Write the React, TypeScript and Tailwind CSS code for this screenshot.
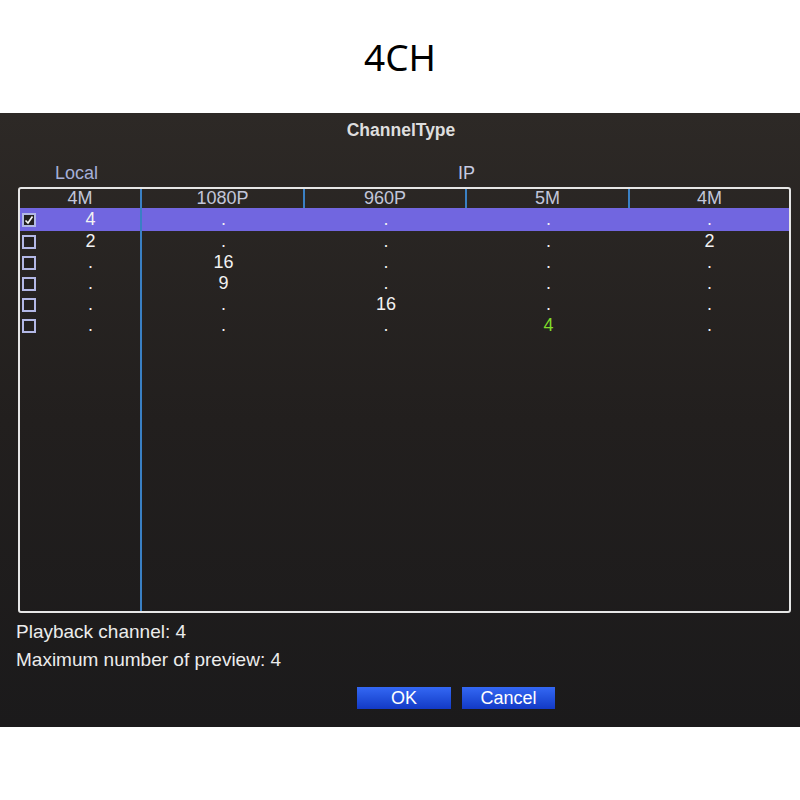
import React from "react";

type Cell = { v: string; green?: boolean };

const rows: { checked: boolean; cells: Cell[] }[] = [
  { checked: true, cells: [{ v: "4" }, { v: "." }, { v: "." }, { v: "." }, { v: "." }] },
  { checked: false, cells: [{ v: "2" }, { v: "." }, { v: "." }, { v: "." }, { v: "2" }] },
  { checked: false, cells: [{ v: "." }, { v: "16" }, { v: "." }, { v: "." }, { v: "." }] },
  { checked: false, cells: [{ v: "." }, { v: "9" }, { v: "." }, { v: "." }, { v: "." }] },
  { checked: false, cells: [{ v: "." }, { v: "." }, { v: "16" }, { v: "." }, { v: "." }] },
  { checked: false, cells: [{ v: "." }, { v: "." }, { v: "." }, { v: "4", green: true }, { v: "." }] },
];

function CheckBox({ checked }: { checked: boolean }) {
  return (
    <div className="w-[14px] h-[14px] border-2 border-[#b3b8e6] bg-[#232020] flex items-center justify-center shrink-0">
      {checked && (
        <svg width="10" height="10" viewBox="0 0 10 10">
          <path d="M1.5 5.5 L4 8 L8.5 1.5" stroke="#f4f4f4" strokeWidth="1.7" fill="none" />
        </svg>
      )}
    </div>
  );
}

export default function App() {
  const font = { fontFamily: '"Liberation Sans", Arial, sans-serif' };
  return (
    <div className="w-[800px] h-[800px] bg-white flex flex-col" style={font}>
      <div
        className="h-[113px] flex items-center justify-center text-[37px] text-black"
        style={{ fontFamily: '"Noto Sans", "DejaVu Sans", sans-serif' }}
      >
        4CH
      </div>
      <div className="h-[614px] bg-linear-to-b from-[#2d2926] via-[#221f1e] to-[#1b1a1b] flex flex-col">
        <div className="h-[34px] flex items-center justify-center text-[17.5px] font-bold text-[#dedede] pl-[2px]">
          ChannelType
        </div>
        <div className="flex pt-[16px] pb-[4px] leading-[20px] text-[18px] pl-[55px]">
          <div className="w-[403px] text-[#a5afd8]">Local</div>
          <div className="text-[#c6cbe2]">IP</div>
        </div>
        <div className="ml-[18px] w-[773px] h-[426px] border-2 border-[#e6e6e6] rounded-[3px] flex flex-col text-[18px]">
          <div className="grid grid-cols-[122px_163px_162px_163px_1fr] h-[19px] leading-[19px] text-[#c2c6da] text-center">
            <div className="border-r-2 border-[#3a80c4]">4M</div>
            <div className="border-r-2 border-[#3a80c4]">1080P</div>
            <div className="border-r-2 border-[#3a80c4]">960P</div>
            <div className="border-r-2 border-[#3a80c4]">5M</div>
            <div>4M</div>
          </div>
          {rows.map((r, i) => (
            <div
              key={i}
              className={
                "grid grid-cols-[122px_163px_162px_163px_1fr] text-center text-[#f2f2f2] " +
                (i === 0 ? "h-[23px] bg-[#7166e0]" : "h-[21px]")
              }
            >
              <div className="border-r-2 border-[#3a80c4] flex items-center pl-[2px]">
                <CheckBox checked={r.checked} />
                <div className="flex-1 pl-[5px] leading-[21px]">{r.cells[0].v}</div>
              </div>
              {r.cells.slice(1).map((c, j) => (
                <div
                  key={j}
                  className={
                    "flex items-center justify-center leading-[21px] " +
                    (c.green ? "text-[#80dc2a]" : "")
                  }
                >
                  {c.v}
                </div>
              ))}
            </div>
          ))}
          <div className="flex-1 grid grid-cols-[122px_1fr]">
            <div className="border-r-2 border-[#3a80c4]" />
            <div />
          </div>
        </div>
        <div className="mt-[5px] pl-[16px] text-[19px] leading-[28px] text-[#ececec]">
          <div>Playback channel: 4</div>
          <div>Maximum number of preview: 4</div>
        </div>
        <div className="mt-[13px] flex gap-[11px] pl-[357px]">
          <div className="w-[94px] h-[22px] bg-linear-to-b from-[#3468f4] to-[#1339c6] text-white text-[18px] leading-[22px] text-center">
            OK
          </div>
          <div className="w-[93px] h-[22px] bg-linear-to-b from-[#3468f4] to-[#1339c6] text-white text-[18px] leading-[22px] text-center">
            Cancel
          </div>
        </div>
      </div>
    </div>
  );
}
